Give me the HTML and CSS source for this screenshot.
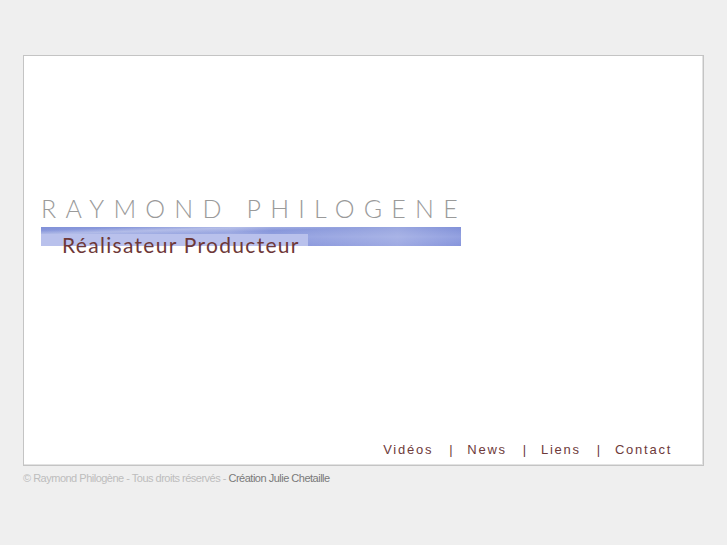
FILE: index.html
```html
<!DOCTYPE html>
<html lang="fr">
<head>
<meta charset="utf-8">
<title>Raymond Philogène</title>
<link rel="stylesheet" href="styles.css">
</head>
<body>
<div class="page">
  <div class="frame">
    <div class="banner">
      <div class="title">RAYMOND PHILOGENE</div>
      <div class="band"><div class="band-light"></div></div>
      <div class="subtitle">Réalisateur Producteur</div>
    </div>
    <nav class="nav">
      <a href="#">Vidéos</a><span class="sep">|</span><a href="#">News</a><span class="sep">|</span><a href="#">Liens</a><span class="sep">|</span><a href="#">Contact</a>
    </nav>
  </div>
  <div class="footer"><span class="light">© Raymond Philogène - Tous droits réservés - </span><span class="dark">Création Julie Chetaille</span></div>
</div>
</body>
</html>
```
FILE: styles.css
```css
html, body {
  margin: 0;
  padding: 0;
  background: #efefef;
}
.page {
  padding: 55px 0 0 23px;
  font-family: "Liberation Sans", Arial, sans-serif;
}
.frame {
  box-sizing: border-box;
  width: 681px;
  height: 411px;
  background: #fff;
  border: 1px solid #c4c4c4;
  box-shadow: inset -1px -1px 0 #e2e2e2;
  display: flex;
  flex-direction: column;
}
.banner {
  margin: 137px 0 0 17px;
  width: 420px;
  display: flex;
  flex-direction: column;
}
.title {
  font-family: "Lato", sans-serif;
  font-weight: 300;
  font-size: 25px;
  line-height: 30px;
  letter-spacing: 9.2px;
  color: #9a9a9a;
  white-space: nowrap;
}
.band {
  margin-top: 4px;
  height: 19px;
  background:
    linear-gradient(178deg, rgba(255,255,255,0) 10%, rgba(255,255,255,0.3) 22%, rgba(255,255,255,0) 35%),
    linear-gradient(90deg, rgba(255,255,255,0) 0%, rgba(255,255,255,0.15) 45%, rgba(255,255,255,0) 55%, rgba(255,255,255,0.2) 85%, rgba(255,255,255,0) 100%),
    linear-gradient(180deg, #8191d8 0%, #93a1e0 50%, #8795dc 100%);
  display: flex;
  align-items: flex-end;
}
.band-light {
  width: 267px;
  height: 12px;
  background: #b9c1ec;
}
.subtitle {
  margin: -12px 0 0 21px;
  font-family: "Lato", sans-serif;
  font-size: 21px;
  line-height: 22px;
  letter-spacing: 1.3px;
  color: #6e3838;
  white-space: nowrap;
}
.nav {
  margin-top: auto;
  align-self: flex-end;
  padding: 0 31px 7px 0;
  font-size: 13px;
  line-height: 16px;
  letter-spacing: 1.75px;
  color: #6e3a3a;
}
.nav a {
  color: #6e3a3a;
  text-decoration: none;
}
.sep {
  margin: 0 13px 0 16px;
}
.footer {
  padding-top: 5px;
  font-size: 11px;
  line-height: 14px;
  letter-spacing: -0.5px;
}
.light { color: #bdbdbd; }
.dark { color: #7a7a7a; }
```
